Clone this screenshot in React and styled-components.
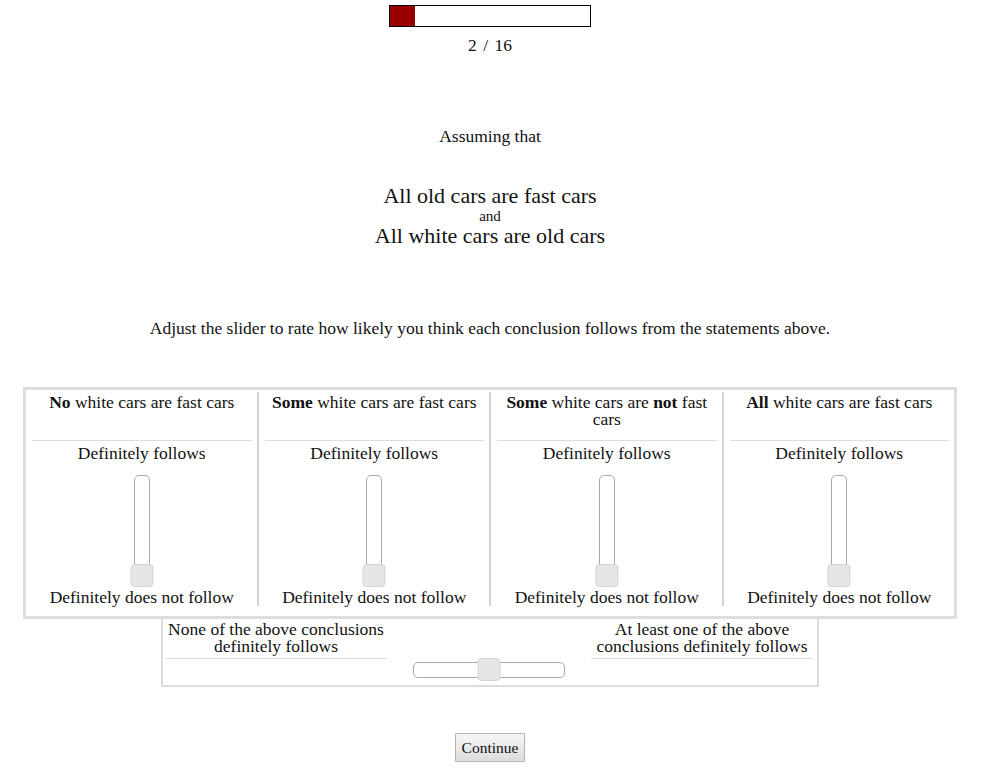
import React from 'react';
import styled, { createGlobalStyle } from 'styled-components';

const GlobalStyle = createGlobalStyle`
  html, body {
    margin: 0;
    padding: 0;
    background: #fff;
  }
  body {
    font-family: 'Liberation Serif', 'Times New Roman', serif;
    color: #111;
  }
`;

const Page = styled.div`
  width: 980px;
  padding-top: 5px;
  display: flex;
  flex-direction: column;
  align-items: center;
  text-align: center;
`;

const ProgressBar = styled.div`
  width: 200px;
  height: 20px;
  border: 1px solid #000;
  background: #fff;
  display: flex;
`;

const ProgressFill = styled.div`
  height: 100%;
  background: #990000;
`;

const ProgressText = styled.div`
  margin-top: 8px;
  font-size: 17.5px;
  line-height: 20px;
  word-spacing: 2px;
`;

const Assuming = styled.div`
  margin-top: 71px;
  font-size: 17.5px;
  line-height: 20px;
`;

const Premises = styled.div`
  margin-top: 39px;
  display: flex;
  flex-direction: column;
  align-items: center;
`;

const Premise = styled.div`
  font-size: 22px;
  line-height: 22px;
`;

const Joiner = styled.div`
  font-size: 15px;
  line-height: 18px;
`;

const Instruction = styled.div`
  margin-top: 71px;
  font-size: 17.5px;
  line-height: 20px;
`;

const Grid = styled.div`
  margin-top: 49px;
  width: 928px;
  border: 3px solid #ddd;
  padding: 2px 0 10px;
  display: flex;
`;

const Column = styled.div`
  flex: 1;
  display: flex;
  flex-direction: column;
  align-items: stretch;
  border-right: ${({ last }) => (last ? 'none' : '2px solid #d4d4d4')};
  padding: 0 5px 0 6px;
  font-size: 17.5px;
`;

const Header = styled.div`
  height: 49px;
  padding-top: 2px;
  line-height: 17px;
  border-bottom: 1px solid #ddd;
  box-sizing: border-box;
  b {
    font-weight: bold;
  }
`;

const Label = styled.div`
  line-height: 18px;
  white-space: nowrap;
`;

const TopLabel = styled(Label)`
  margin-top: 3px;
`;

const VerticalArea = styled.div`
  height: 126px;
  display: flex;
  justify-content: center;
  padding-top: 13px;
  box-sizing: border-box;
`;

const VerticalTrack = styled.div`
  position: relative;
  width: 14px;
  height: 99px;
  border: 1px solid #aaa;
  border-radius: 5px;
  background: #fff;
`;

const Thumb = styled.div`
  position: absolute;
  width: 21px;
  height: 21px;
  border: 1px solid #d3d3d3;
  border-radius: 4px;
  background: #e6e6e6;
  box-sizing: content-box;
`;

const VThumb = styled(Thumb)`
  left: 50%;
  bottom: -12px;
  transform: translateX(-50%);
`;

const Summary = styled.div`
  width: 648px;
  border: 2px solid #ddd;
  border-top: none;
  display: flex;
  align-items: stretch;
  padding: 2px 4px 0 2px;
  height: 64px;
  box-sizing: content-box;
`;

const SummaryLabel = styled.div`
  width: 222px;
  height: 37px;
  font-size: 17.5px;
  line-height: 17px;
  border-bottom: 1px solid #ddd;
`;

const SummaryMiddle = styled.div`
  flex: 1;
  display: flex;
  justify-content: center;
  padding-top: 41px;
`;

const HorizontalTrack = styled.div`
  position: relative;
  width: 150px;
  height: 14px;
  border: 1px solid #aaa;
  border-radius: 5px;
  background: #fff;
`;

const HThumb = styled(Thumb)`
  left: 50%;
  top: -5px;
  transform: translateX(-50%);
`;

const ContinueButton = styled.button`
  margin-top: 46px;
  font-family: 'Liberation Serif', 'Times New Roman', serif;
  font-size: 15.5px;
  color: #111;
  width: 70px;
  height: 29px;
  padding: 0;
  border: 1px solid #b5b5b5;
  border-radius: 1px;
  background: linear-gradient(to bottom, #f7f7f7, #dcdcdc);
  box-shadow: 0 1px 1px rgba(0, 0, 0, 0.15);
  cursor: pointer;
`;

const conclusions = [
  <><b>No</b> white cars are fast cars</>,
  <><b>Some</b> white cars are fast cars</>,
  <><b>Some</b> white cars are <b>not</b> fast cars</>,
  <><b>All</b> white cars are fast cars</>,
];

const current = 2;
const total = 16;

export default function App() {
  return (
    <>
      <GlobalStyle />
      <Page>
        <ProgressBar>
          <ProgressFill style={{ width: `${(current / total) * 100}%` }} />
        </ProgressBar>
        <ProgressText>{current} / {total}</ProgressText>

        <Assuming>Assuming that</Assuming>
        <Premises>
          <Premise>All old cars are fast cars</Premise>
          <Joiner>and</Joiner>
          <Premise>All white cars are old cars</Premise>
        </Premises>

        <Instruction>
          Adjust the slider to rate how likely you think each conclusion follows from the statements above.
        </Instruction>

        <Grid>
          {conclusions.map((text, i) => (
            <Column key={i} last={i === conclusions.length - 1}>
              <Header>{text}</Header>
              <TopLabel>Definitely follows</TopLabel>
              <VerticalArea>
                <VerticalTrack>
                  <VThumb />
                </VerticalTrack>
              </VerticalArea>
              <Label>Definitely does not follow</Label>
            </Column>
          ))}
        </Grid>

        <Summary>
          <SummaryLabel>None of the above conclusions definitely follows</SummaryLabel>
          <SummaryMiddle>
            <HorizontalTrack>
              <HThumb />
            </HorizontalTrack>
          </SummaryMiddle>
          <SummaryLabel>At least one of the above conclusions definitely follows</SummaryLabel>
        </Summary>

        <ContinueButton>Continue</ContinueButton>
      </Page>
    </>
  );
}
